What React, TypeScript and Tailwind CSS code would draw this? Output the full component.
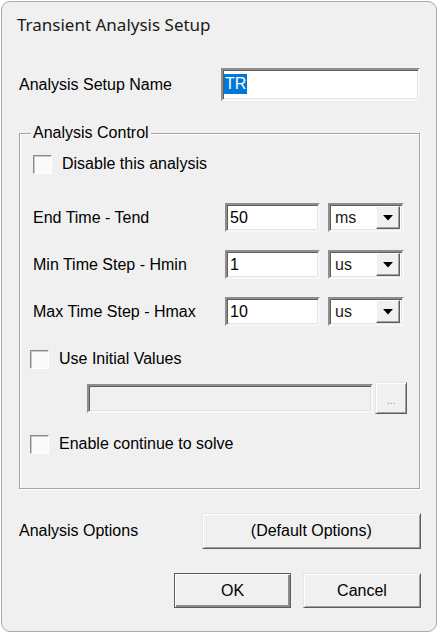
const ui = { fontFamily: '"Liberation Sans", Arial, sans-serif' };
const title = { fontFamily: '"Noto Sans", "Open Sans", sans-serif' };

function Sunken({ className = '', children }: { className?: string; children?: React.ReactNode }) {
  return (
    <div
      className={`border-2 border-t-[#8e8e8e] border-l-[#8e8e8e] border-b-[#f7f7f7] border-r-[#f7f7f7] shadow-[inset_1px_1px_0_#5e5e5e,inset_-1px_-1px_0_#e4e4e4] ${className}`}
    >
      {children}
    </div>
  );
}

function Check({ label, className = '' }: { label: string; className?: string }) {
  return (
    <div className={`flex h-[20px] items-center ${className}`}>
      <div className="h-[19px] w-[19px] shrink-0 border border-t-[#8a8a8a] border-l-[#8a8a8a] border-b-white border-r-white bg-[#fafafa] shadow-[inset_1px_1px_0_#c8c8c8]" />
      <span className="ml-[10px] text-[16px] text-black">{label}</span>
    </div>
  );
}

function Btn({ label, def = false, className = '' }: { label: string; def?: boolean; className?: string }) {
  return (
    <div
      className={`flex items-center justify-center text-[16px] text-black ${
        def
          ? 'border border-[#5a5a5a] shadow-[inset_1px_1px_0_#ffffff,inset_-2px_-2px_0_#8c8c8c]'
          : 'border border-t-[#e6e6e6] border-l-[#e6e6e6] border-b-[#5e5e5e] border-r-[#5e5e5e] shadow-[inset_1px_1px_0_#ffffff,inset_-1px_-1px_0_#a0a0a0]'
      } bg-[#f0f0f0] ${className}`}
    >
      {label}
    </div>
  );
}

function TimeRow({ label, value, unit, className = '' }: { label: string; value: string; unit: string; className?: string }) {
  return (
    <div className={`flex h-[29px] items-center ${className}`}>
      <span className="w-[192px] text-[16px] text-black">{label}</span>
      <Sunken className="flex h-[29px] w-[95px] items-center bg-white pl-[3px] text-[16px] text-black">{value}</Sunken>
      <Sunken className="ml-[8px] flex h-[29px] w-[76px] items-center justify-between bg-white pl-[5px] pr-[2px] text-[16px] text-[#1a1a1a]">
        <span>{unit}</span>
        <div className="flex h-[23px] w-[24px] items-center justify-center border border-t-white border-l-white border-b-[#5e5e5e] border-r-[#5e5e5e] bg-[#f0f0f0] shadow-[inset_-1px_-1px_0_#a0a0a0]">
          <svg width="10" height="6" viewBox="0 0 10 6">
            <path d="M0 0h10L5 5.5z" fill="#000" />
          </svg>
        </div>
      </Sunken>
    </div>
  );
}

export default function App() {
  return (
    <div className="h-[634px] w-[439px] bg-white pl-[1px] pt-[1px]" style={ui}>
      <div className="flex h-[631px] w-[436px] flex-col rounded-[9px] border border-[#ababab] bg-[#f0f0f0] pl-[17px] pr-[15px] pt-[11px]">
        <div className="-ml-[2px] text-[17px] leading-[23px] text-[#1a1a1a]" style={title}>
          Transient Analysis Setup
        </div>

        <div className="mt-[32px] flex h-[32px] items-center">
          <span className="w-[202px] pt-[2px] text-[16px] text-black">Analysis Setup Name</span>
          <Sunken className="flex h-[33px] w-[199px] items-center bg-white pl-[1px]">
            <span className="bg-[#0078d7] px-[1px] text-[16px] leading-[20px] text-white">TR</span>
          </Sunken>
        </div>

        <div className="relative mt-[33px] h-[356px] w-[401px] border border-[#a3a3a3] shadow-[inset_1px_1px_0_#ffffff,1px_1px_0_#ffffff] pl-[13px] pt-[20px]">
          <span className="absolute -top-[11px] left-[11px] bg-[#f0f0f0] px-[2px] text-[16px] leading-[20px] text-black">
            Analysis Control
          </span>
          <Check label="Disable this analysis" />
          <TimeRow label="End Time - Tend" value="50" unit="ms" className="mt-[29px]" />
          <TimeRow label="Min Time Step - Hmin" value="1" unit="us" className="mt-[18px]" />
          <TimeRow label="Max Time Step - Hmax" value="10" unit="us" className="mt-[18px]" />
          <Check label="Use Initial Values" className="-ml-[3px] mt-[23px]" />
          <div className="ml-[54px] mt-[13px] flex items-center">
            <Sunken className="h-[29px] w-[286px] bg-[#f0f0f0]" />
            <div className="ml-[2px] flex h-[32px] w-[32px] items-end justify-center border border-t-[#e6e6e6] border-l-[#e6e6e6] border-b-[#5e5e5e] border-r-[#5e5e5e] bg-[#f0f0f0] pb-[7px] text-[11px] leading-[11px] text-[#9a9a9a] shadow-[inset_1px_1px_0_#ffffff,inset_-1px_-1px_0_#a0a0a0]">
              ...
            </div>
          </div>
          <Check label="Enable continue to solve" className="-ml-[3px] mt-[20px]" />
        </div>

        <div className="mt-[24px] flex h-[36px] items-center">
          <span className="w-[183px] text-[16px] text-black">Analysis Options</span>
          <Btn label="(Default Options)" className="h-[36px] w-[220px]" />
        </div>

        <div className="mt-[24px] flex justify-end">
          <Btn label="OK" def className="h-[35px] w-[117px]" />
          <Btn label="Cancel" className="ml-[12px] h-[35px] w-[118px]" />
        </div>
      </div>
    </div>
  );
}
